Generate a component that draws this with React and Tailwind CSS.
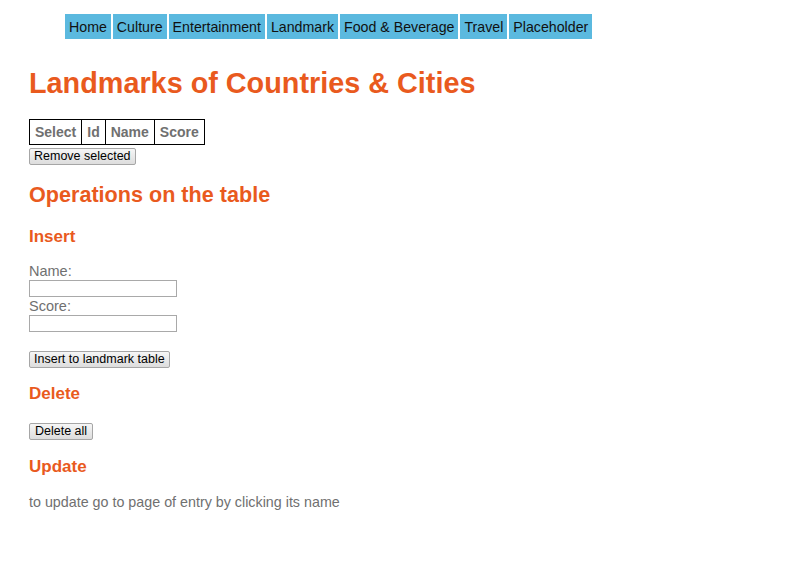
export default function App() {
  const nav = ["Home", "Culture", "Entertainment", "Landmark", "Food & Beverage", "Travel", "Placeholder"];
  const btn =
    "block border border-[#a6a6a6] rounded-[2px] bg-gradient-to-b from-[#f6f6f6] to-[#dddddd] px-[4px] text-[12.5px] leading-[15px] text-black";
  return (
    <div className="min-h-[572px] bg-white pl-[29px] text-[#707070]" style={{ fontFamily: '"Liberation Sans", Arial, sans-serif' }}>
      <nav className="flex gap-[2px] pl-[36px] pt-[14px]">
        {nav.map((n) => (
          <span key={n} className="bg-[#5bb9df] px-[4px] pt-[1px] text-[14.2px] leading-[24px] text-[#111]">
            {n}
          </span>
        ))}
      </nav>
      <h1 className="mt-[25px] text-[28.8px] font-bold leading-[38px] text-[#e95a1e]">Landmarks of Countries &amp; Cities</h1>
      <table className="mt-[17px] border-collapse text-[14px] font-bold">
        <thead>
          <tr>
            {["Select", "Id", "Name", "Score"].map((h) => (
              <th key={h} className="border border-black px-[5px] pt-[1px] leading-[23px]">
                {h}
              </th>
            ))}
          </tr>
        </thead>
      </table>
      <button className={"mt-[3px] " + btn}>Remove selected</button>
      <h2 className="mt-[17px] text-[21.6px] font-bold leading-[26px] text-[#e95a1e]">Operations on the table</h2>
      <h3 className="mt-[19px] text-[17px] font-bold leading-[20px] text-[#e95a1e]">Insert</h3>
      <div className="mt-[16px] text-[14.5px] leading-[17px]">Name:</div>
      <input className="block h-[17px] w-[148px] border border-[#a9a9a9] bg-white" />
      <div className="mt-[1px] text-[14.5px] leading-[17px]">Score:</div>
      <input className="block h-[17px] w-[148px] border border-[#a9a9a9] bg-white" />
      <button className={"mt-[19px] " + btn}>Insert to landmark table</button>
      <h3 className="mt-[16px] text-[17px] font-bold leading-[20px] text-[#e95a1e]">Delete</h3>
      <button className={"mt-[19px] px-[5px] " + btn}>Delete all</button>
      <h3 className="mt-[17px] text-[17px] font-bold leading-[20px] text-[#e95a1e]">Update</h3>
      <p className="mt-[16px] text-[14.3px] leading-[18px]">to update go to page of entry by clicking its name</p>
    </div>
  );
}
